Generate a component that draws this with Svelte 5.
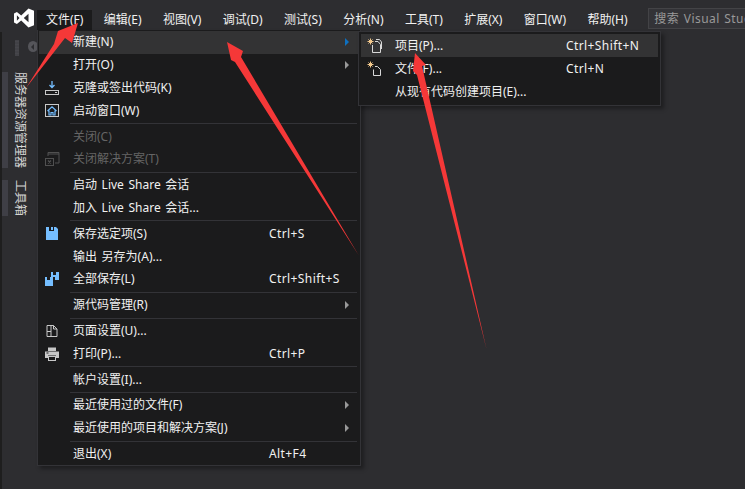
<script>
  const menus = ['文件(F)','编辑(E)','视图(V)','调试(D)','测试(S)','分析(N)','工具(T)','扩展(X)','窗口(W)','帮助(H)'];
  const groups = [
    [
      { t:'新建(N)', sub:true, hot:true },
      { t:'打开(O)', sub:true },
      { t:'克隆或签出代码(K)', ic:'clone' },
      { t:'启动窗口(W)', ic:'home' }
    ],
    [ { t:'关闭(C)', off:true }, { t:'关闭解决方案(T)', off:true, ic:'closeSln' } ],
    [ { t:'启动 Live Share 会话' }, { t:'加入 Live Share 会话...' } ],
    [
      { t:'保存选定项(S)', k:'Ctrl+S', ic:'save' },
      { t:'输出 另存为(A)...' },
      { t:'全部保存(L)', k:'Ctrl+Shift+S', ic:'saveAll' }
    ],
    [ { t:'源代码管理(R)', sub:true } ],
    [ { t:'页面设置(U)...', ic:'page' }, { t:'打印(P)...', k:'Ctrl+P', ic:'print' } ],
    [ { t:'帐户设置(I)...' } ],
    [ { t:'最近使用过的文件(F)', sub:true }, { t:'最近使用的项目和解决方案(J)', sub:true } ],
    [ { t:'退出(X)', k:'Alt+F4' } ]
  ];
</script>

{#snippet icon(name)}
  <svg class="icon" width="16" height="16" viewBox="0 0 16 16" aria-hidden="true">
    {#if name === 'clone'}
      <path d="M8 1v6M5.500 5 8 7.500 10.500 5" fill="none" stroke="#75beff" stroke-width="1.300"/>
      <rect x="1.500" y="10.500" width="13" height="4" fill="none" stroke="#c8c8c8"/>
      <rect x="11" y="12" width="2" height="1" fill="#c8c8c8"/>
    {:else if name === 'home'}
      <rect x="1.500" y="1.500" width="13" height="12" fill="none" stroke="#c8c8c8"/>
      <path d="M3.500 8 8 3.800 12.500 8M5 7.500v4.500h2V9.500h2V12h2V7.500" fill="none" stroke="#75beff" stroke-width="1.200"/>
    {:else if name === 'closeSln'}
      <path d="M4 5V1.500h11V12h-4M4 3h11" fill="none" stroke="#505050"/>
      <rect x="1.500" y="7.500" width="8" height="7" fill="none" stroke="#505050"/>
      <path d="M4 9.500l3 3M7 9.500l-3 3" stroke="#505050" stroke-width="1.200"/>
    {:else if name === 'save'}
      <path d="M2 1h3v4h5V1h2l2 2v11H2z" fill="#75beff"/>
      <rect x="7" y="1" width="2" height="3" fill="#75beff"/>
    {:else if name === 'saveAll'}
      <path d="M7 1h2v3h3V1h3v8h-4V6H7z" fill="#75beff"/>
      <path d="M1 6h2v3h3V6h3v9H1z" fill="#75beff"/>
    {:else if name === 'page'}
      <path d="M3 2.500h6.500L13 6v7.500H3zM7 2.500v11M3 8.500h4M9.500 2.500V6H13" fill="none" stroke="#c8c8c8"/>
    {:else if name === 'print'}
      <path d="M4 1.500h8V5H4z" fill="#c8c8c8"/>
      <path d="M1 5.500h14V12h-3V9.500H4V12H1z" fill="#c8c8c8"/>
      <rect x="4.500" y="10.500" width="7" height="4" fill="none" stroke="#c8c8c8"/>
      <rect x="2.500" y="6.500" width="2" height="1" fill="#1b1b1c"/>
    {/if}
  </svg>
{/snippet}

<div class="screen">
  <header class="titlebar">
    <svg class="logo" width="20" height="20" viewBox="0 0 20 20" aria-hidden="true">
      <path fill="#fff" fill-rule="evenodd" d="M14.500.500 20 2.800v14.400l-5.500 2.300-7.300-6.900-4.300 3.300L0 14.500v-9l2.900-1.400 4.300 3.300zM14.500 5.700 9.800 10l4.700 4.300zM2.900 7.300v5.400L5.500 10z"/>
    </svg>
    <nav class="menubar">
      {#each menus as m, i}
        <span class="top" class:open={i === 0}>{m}</span>
      {/each}
    </nav>
    <div class="search">搜索 Visual Stud</div>
  </header>

  <div class="body">
    <aside class="rail">
      <div class="grip-row">
        <div class="grip"></div>
        <div class="back"><span></span></div>
      </div>
      <div class="tabs">
        <div class="tab long">服务器资源管理器</div>
        <div class="tab">工具箱</div>
      </div>
    </aside>
  </div>

  <div class="menu main">
    {#each groups as g, gi}
      {#if gi > 0}<div class="sep"></div>{/if}
      {#each g as r}
        <div class="row" class:hot={r.hot} class:off={r.off}>
          <span class="ic">{#if r.ic}{@render icon(r.ic)}{/if}</span>
          <span class="label">{r.t}</span>
          {#if r.k}<span class="key">{r.k}</span>{/if}
          {#if r.sub}<span class="chev" class:blue={r.hot}></span>{/if}
        </div>
      {/each}
    {/each}
  </div>

  <div class="menu submenu">
    <div class="row2 hot">
      <svg class="icon2" width="16" height="16" viewBox="0 0 16 16" aria-hidden="true">
        <path d="M3.500 0.500v6M0.500 3.500h6M1.500 1.500l4 4M5.500 1.500l-4 4" stroke="#f2c88c" stroke-width="1"/>
        <path d="M5.500 7v7.500h8V6.500l-2.500-3H8M9 1.500h3.500l2 2.500v7" fill="none" stroke="#d8d8d8"/>
      </svg>
      <span class="label2">项目(P)...</span><span class="key2">Ctrl+Shift+N</span>
    </div>
    <div class="row2">
      <svg class="icon2" width="16" height="16" viewBox="0 0 16 16" aria-hidden="true">
        <path d="M3.500 0.500v6M0.500 3.500h6M1.500 1.500l4 4M5.500 1.500l-4 4" stroke="#f2c88c" stroke-width="1"/>
        <path d="M8 5.500h2.500l3 3v6h-7V8.500" fill="none" stroke="#d8d8d8"/>
      </svg>
      <span class="label2">文件(F)...</span><span class="key2">Ctrl+N</span>
    </div>
    <div class="row2">
      <span class="icon2"></span>
      <span class="label2">从现有代码创建项目(E)...</span>
    </div>
  </div>

  <svg class="arrows" width="745" height="489" viewBox="0 0 745 489" aria-hidden="true">
    <polygon points="26,88 54,44 58,31 78,23 72,43 65,38"/>
    <polygon points="227,42 243,51 241,57 358.500,255 235,62 231,60"/>
    <polygon points="415,53 426,65 422,66 486.500,349 417,75 413,71"/>
  </svg>
</div>

<style>
  :global(body) {
    margin: 0;
    background: #2d2d30;
  }
  .screen {
    position: relative;
    width: 745px;
    height: 489px;
    overflow: hidden;
    background: #2d2d30;
    color: #f1f1f1;
    font: 12px/16px "Noto Sans", "Noto Sans CJK SC", sans-serif;
  }
  .titlebar {
    display: flex;
    align-items: flex-start;
    height: 32px;
    box-sizing: border-box;
    padding: 8px 0 0 14px;
  }
  .logo {
    flex: none;
    margin-right: 3px;
  }
  .menubar {
    display: flex;
    margin-top: 2px;
    flex: none;
  }
  .top {
    height: 21px;
    padding: 2px 10.7px 0;
    box-sizing: border-box;
    white-space: nowrap;
  }
  .top.open {
    background: #1b1b1c;
    padding: 2px 9px 0;
    margin-right: 0.5px;
  }
  .search {
    flex: none;
    width: 110px;
    height: 21px;
    box-sizing: border-box;
    margin-left: 10px;
    padding: 2px 0 0 5px;
    background: #333337;
    border: 1px solid #434346;
    color: #999;
    letter-spacing: 0.45px;
    word-spacing: 1px;
    white-space: nowrap;
    overflow: hidden;
  }
  .body {
    display: flex;
    height: 457px;
    border-left: 2px solid #1e1e1e;
  }
  .rail {
    display: flex;
    flex-direction: column;
    width: 36px;
  }
  .grip-row {
    display: flex;
    height: 40px;
    padding: 8px 0 0 13px;
    box-sizing: border-box;
    gap: 9px;
  }
  .grip {
    width: 4px;
    height: 16px;
    background-image: radial-gradient(#46464b 0.8px, transparent 1px);
    background-size: 2px 3px;
  }
  .back {
    width: 11px;
    height: 11px;
    margin-top: 1px;
    border-radius: 50%;
    background: #55555a;
    display: flex;
    align-items: center;
    justify-content: center;
  }
  .back span {
    width: 0;
    height: 0;
    border: 3px solid transparent;
    border-right-color: #2d2d30;
    margin-left: -3px;
  }
  .tabs {
    display: flex;
    flex-direction: column;
    gap: 12px;
  }
  .tab {
    width: 36px;
    height: 36px;
    box-sizing: border-box;
    writing-mode: vertical-rl;
    text-orientation: sideways;
    line-height: 13px;
    color: #d4d4d4;
    background: linear-gradient(to right, #3f3f46 6px, transparent 6px);
    display: flex;
    align-items: center;
    justify-content: flex-start;
  }
  .tab.long {
    height: 96px;
  }

  .menu {
    position: absolute;
    box-sizing: border-box;
    background: #1b1b1c;
    border: 1px solid #333337;
    box-shadow: 3px 3px 4px rgba(0, 0, 0, 0.35);
  }
  .main {
    left: 37px;
    top: 30px;
    width: 324px;
    height: 436px;
    border-top: 0;
    padding: 1px;
  }
  .row {
    display: flex;
    align-items: center;
    position: relative;
    height: 22.8px;
    white-space: nowrap;
  }
  .row.hot {
    background: #333334;
  }
  .row.off {
    color: #656565;
  }
  .ic {
    flex: none;
    width: 34px;
    display: flex;
    padding-left: 5px;
    box-sizing: border-box;
  }
  .label {
    flex: none;
    width: 196px;
    word-spacing: 1.5px;
  }
  .key, .key2 {
    letter-spacing: 0.4px;
  }
  .chev {
    position: absolute;
    left: 306px;
    top: 7px;
    width: 0;
    height: 0;
    border-style: solid;
    border-width: 4px 0 4px 4px;
    border-color: transparent transparent transparent #999;
  }
  .chev.blue {
    border-left-color: #0e70c0;
  }
  .sep {
    height: 1px;
    margin: 1px 2px 1px 31px;
    background: #333337;
  }
  .submenu {
    left: 358px;
    top: 31px;
    width: 303px;
    height: 75px;
    padding: 2px;
  }
  .row2 {
    display: flex;
    align-items: center;
    height: 23px;
    white-space: nowrap;
  }
  .row2.hot {
    background: #333334;
  }
  .icon2 {
    flex: none;
    display: block;
    width: 16px;
    height: 16px;
    margin: 0 12px 0 6px;
  }
  .label2 {
    flex: none;
    width: 171px;
  }
  .arrows {
    position: absolute;
    left: 0;
    top: 0;
    pointer-events: none;
  }
  .arrows polygon {
    fill: #f53838;
  }
</style>
